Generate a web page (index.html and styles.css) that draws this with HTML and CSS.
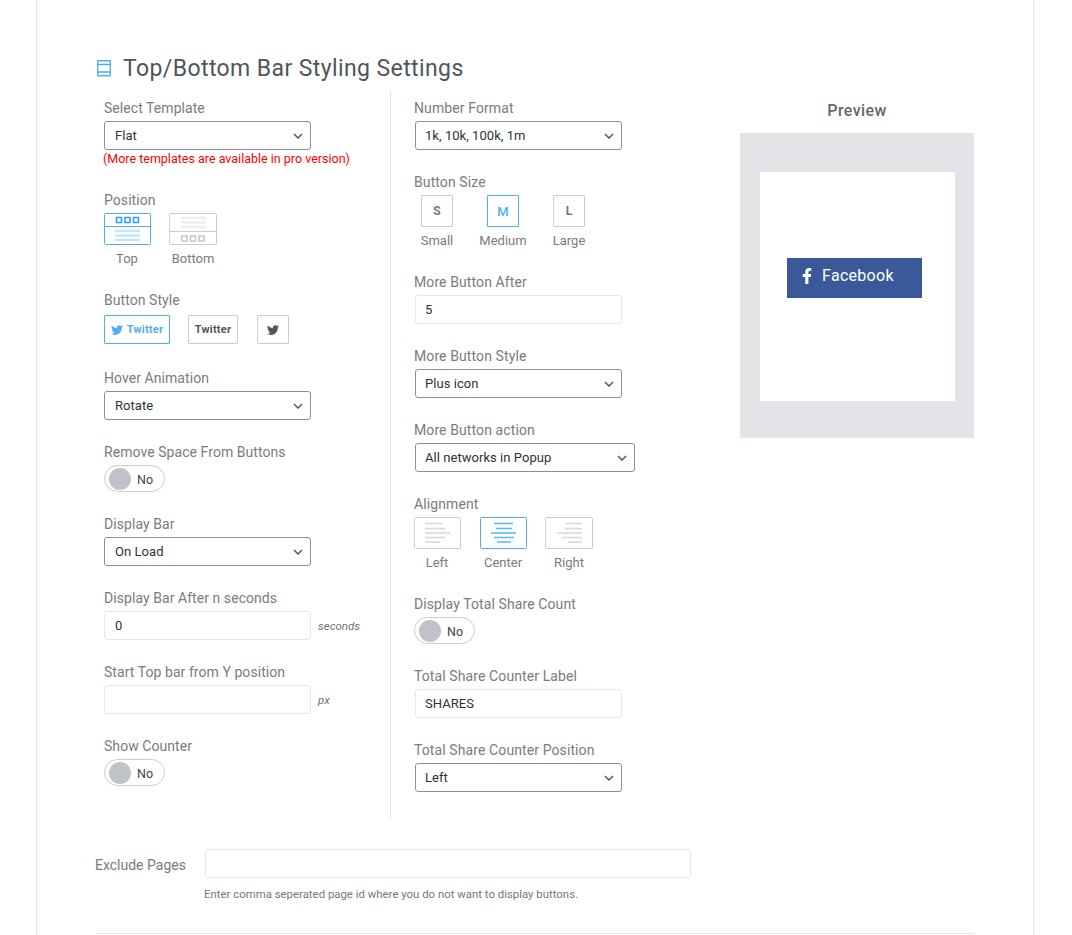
FILE: index.html
```html
<!DOCTYPE html>
<html lang="en">
<head>
    <meta charset="utf-8">
    <title>Top/Bottom Bar Styling Settings</title>
    <link rel="stylesheet" href="styles.css">
</head>
<body>
<div class="wrap">
    <h1 class="title">
        <svg class="title-icon" width="16" height="18" viewBox="0 0 16 18" fill="none" stroke="#4eaef5" stroke-width="1.4">
            <rect x="1.7" y="1.7" width="12.6" height="15" rx="0.5"/>
            <path d="M2 5.5h12M2 13h12"/>
        </svg>
        Top/Bottom Bar Styling Settings
    </h1>

    <div class="columns">
        <div class="col col-left">
            <div class="field">
                <label>Select Template</label>
                <select class="input"><option>Flat</option></select>
                <p class="note">(More templates are available in pro version)</p>
            </div>
            <div class="field">
                <label>Position</label>
                <div class="choices positions">
                    <div class="choice active">
                        <svg class="thumb" width="47" height="32" viewBox="0 0 47 32" fill="none">
                            <rect x="0.5" y="0.5" width="46" height="31" rx="1" stroke="#4eaef5"/>
                            <path d="M1 13.5h45" stroke="#4eaef5"/>
                            <path d="M12.5 4.5h5v5h-5zM21 4.5h5v5h-5zM29.500 4.500h5v5h-5z" stroke="#2f9ff5" stroke-width="1.600"/>
                            <path d="M11 18h25M11 22.500h25M11 27h25" stroke="#c5e4fb" stroke-width="2.500"/>
                        </svg>
                        <span>Top</span>
                    </div>
                    <div class="choice">
                        <svg class="thumb" width="48" height="32" viewBox="0 0 48 32" fill="none">
                            <rect x="0.5" y="0.5" width="47" height="31" rx="1" stroke="#c9ccd2"/>
                            <path d="M1 18.500h46" stroke="#c9ccd2"/>
                            <path d="M12 5h25M12 9.500h25M12 14h25" stroke="#eceef1" stroke-width="2.500"/>
                            <path d="M13 23h5v5h-5zM21.500 23h5v5h-5zM30 23h5v5h-5z" stroke="#c3c6cc" stroke-width="1.600"/>
                        </svg>
                        <span>Bottom</span>
                    </div>
                </div>
            </div>
            <div class="field field-style">
                <label>Button Style</label>
                <div class="styles">
                    <div class="style-btn active wide">
                        <svg width="12" height="10" viewBox="0 0 512 416"><path fill="currentColor" d="M459 104c.3 4.500.3 9.100.3 13.700 0 138.700-105.600 298.600-298.600 298.600-59.500 0-114.700-17.200-161.100-47.100 8.400 1 16.600 1.300 25.300 1.300 49.100 0 94.200-16.600 130.300-44.800-46.100-1-84.800-31.200-98.100-72.800 6.500 1 13 1.600 19.800 1.600 9.400 0 18.800-1.300 27.600-3.600-48.100-9.700-84.100-52-84.100-103v-1.300c14 7.800 30.200 12.700 47.400 13.300-28.300-18.800-46.800-51-46.800-87.400 0-19.500 5.200-37.400 14.300-53 51.700 63.700 129.300 105.300 216.400 109.800-1.600-7.800-2.600-15.900-2.600-24 0-57.800 46.800-104.900 104.900-104.900 30.200 0 57.500 12.700 76.700 33.100 23.700-4.500 46.500-13.300 66.600-25.300-7.800 24-24.400 44.200-46.100 57.200 21.100-2.300 41.600-8.100 60.400-16.200-14.300 20.800-32.200 39.300-52.600 54.200z"/></svg>
                        <b>Twitter</b>
                    </div>
                    <div class="style-btn text"><b>Twitter</b></div>
                    <div class="style-btn icon">
                        <svg width="12" height="10" viewBox="0 0 512 416"><path fill="currentColor" d="M459 104c.3 4.500.3 9.100.3 13.700 0 138.700-105.600 298.600-298.600 298.600-59.500 0-114.700-17.200-161.100-47.100 8.400 1 16.600 1.300 25.300 1.300 49.100 0 94.200-16.600 130.300-44.800-46.100-1-84.800-31.200-98.100-72.800 6.500 1 13 1.600 19.800 1.600 9.400 0 18.800-1.300 27.600-3.600-48.100-9.700-84.100-52-84.100-103v-1.300c14 7.800 30.200 12.700 47.400 13.300-28.300-18.800-46.800-51-46.800-87.400 0-19.500 5.200-37.400 14.300-53 51.700 63.700 129.300 105.300 216.400 109.800-1.600-7.800-2.600-15.900-2.600-24 0-57.800 46.800-104.900 104.900-104.900 30.200 0 57.500 12.700 76.700 33.100 23.700-4.500 46.500-13.300 66.600-25.300-7.800 24-24.400 44.200-46.100 57.200 21.100-2.300 41.600-8.100 60.400-16.200-14.300 20.800-32.200 39.300-52.600 54.200z"/></svg>
                    </div>
                </div>
            </div>
            <div class="field">
                <label>Hover Animation</label>
                <select class="input"><option>Rotate</option></select>
            </div>
            <div class="field">
                <label>Remove Space From Buttons</label>
                <div class="toggle"><i></i>No</div>
            </div>
            <div class="field">
                <label>Display Bar</label>
                <select class="input"><option>On Load</option></select>
            </div>
            <div class="field">
                <label>Display Bar After n seconds</label>
                <div class="with-unit">
                    <input class="input text-input" type="text" value="0">
                    <em>seconds</em>
                </div>
            </div>
            <div class="field">
                <label>Start Top bar from Y position</label>
                <div class="with-unit">
                    <input class="input text-input" type="text">
                    <em>px</em>
                </div>
            </div>
            <div class="field">
                <label>Show Counter</label>
                <div class="toggle"><i></i>No</div>
            </div>
        </div>

        <div class="col col-mid">
            <div class="field">
                <label>Number Format</label>
                <select class="input"><option>1k, 10k, 100k, 1m</option></select>
            </div>
            <div class="field">
                <label>Button Size</label>
                <div class="choices sizes">
                    <div class="choice"><div class="size">S</div><span>Small</span></div>
                    <div class="choice active"><div class="size">M</div><span>Medium</span></div>
                    <div class="choice"><div class="size">L</div><span>Large</span></div>
                </div>
            </div>
            <div class="field">
                <label>More Button After</label>
                <input class="input text-input" type="text" value="5">
            </div>
            <div class="field">
                <label>More Button Style</label>
                <select class="input"><option>Plus icon</option></select>
            </div>
            <div class="field">
                <label>More Button action</label>
                <select class="input input-wide"><option>All networks in Popup</option></select>
            </div>
            <div class="field">
                <label>Alignment</label>
                <div class="choices aligns">
                    <div class="choice">
                        <svg class="thumb" width="47" height="32" viewBox="0 0 47 32" fill="none">
                            <rect x="0.500" y="0.500" width="46" height="31" rx="1" stroke="#c9ccd2"/>
                            <path d="M11 6.500h17M11 11.500h20M11 16h25M11 20.500h20M11 25h15" stroke="#d3d6da" stroke-width="1.600"/>
                        </svg>
                        <span>Left</span>
                    </div>
                    <div class="choice active">
                        <svg class="thumb" width="47" height="32" viewBox="0 0 47 32" fill="none">
                            <rect x="0.500" y="0.500" width="46" height="31" rx="1" stroke="#4eaef5"/>
                            <path d="M14 6.500h19M16 11.500h16M11 16h25M14 20.500h20M17 25h14" stroke="#5ab5f6" stroke-width="1.600"/>
                        </svg>
                        <span>Center</span>
                    </div>
                    <div class="choice">
                        <svg class="thumb" width="48" height="32" viewBox="0 0 48 32" fill="none">
                            <rect x="0.500" y="0.500" width="47" height="31" rx="1" stroke="#c9ccd2"/>
                            <path d="M21 6.500h16M20 11.500h17M12 16h25M17 20.500h20M23 25h14" stroke="#d3d6da" stroke-width="1.600"/>
                        </svg>
                        <span>Right</span>
                    </div>
                </div>
            </div>
            <div class="field">
                <label>Display Total Share Count</label>
                <div class="toggle"><i></i>No</div>
            </div>
            <div class="field">
                <label>Total Share Counter Label</label>
                <input class="input text-input" type="text" value="SHARES">
            </div>
            <div class="field">
                <label>Total Share Counter Position</label>
                <select class="input"><option>Left</option></select>
            </div>
        </div>

        <div class="col-preview">
            <h3>Preview</h3>
            <div class="preview-box">
                <div class="preview-inner">
                    <div class="fb-btn">
                        <svg width="10" height="16" viewBox="0 0 320 512"><path fill="#fff" d="M279 288l14-93h-89v-60c0-25 12-50 52-50h41V7s-37-7-72-7c-73 0-121 44-121 125v70H23v93h81v224h100V288z"/></svg>
                        <span>Facebook</span>
                    </div>
                </div>
            </div>
        </div>
    </div>

    <div class="exclude">
        <label>Exclude Pages</label>
        <input class="text-input exclude-input" type="text">
    </div>
    <p class="help">Enter comma seperated page id where you do not want to display buttons.</p>
    <hr class="rule">
</div>
</body>
</html>
```

FILE: styles.css
```css
* {
    box-sizing: border-box;
}

html, body {
    height: 935px;
    margin: 0;
    overflow: hidden;
    background-color: #fff;
}

body {
    font-family: Roboto, "Liberation Sans", sans-serif;
    font-size: 14px;
    color: #7b7b7b;
}

.wrap {
    width: 998px;
    height: 935px;
    margin-left: 36px;
    padding: 51px 59px 0;
    border-left: 1px solid #e6e6e6;
    border-right: 1px solid #e6e6e6;
}

.title {
    display: flex;
    align-items: center;
    gap: 11px;
    height: 34px;
    margin: 0 0 6px;
    padding-top: 1px;
    font-size: 23px;
    letter-spacing: 0.4px;
    font-weight: 400;
    color: #50555a;
}

.title-icon {
    margin-top: -2px;
}

.columns {
    display: flex;
    height: 727px;
}

.col {
    padding-top: 7px;
}

.col-left {
    width: 295px;
    padding-left: 8px;
    border-right: 1px solid #e2e4e7;
}

.col-mid {
    width: 325px;
    padding-left: 24px;
}

.field {
    margin-bottom: 22px;
}

.field label {
    display: block;
    height: 20px;
    margin-bottom: 3px;
    line-height: 20px;
    font-size: 14px;
    letter-spacing: 0.06px;
}

.col-mid label {
    margin-left: -1px;
    letter-spacing: 0.1px;
}

.input {
    display: block;
    width: 207px;
    height: 29px;
    padding: 0 24px 0 10px;
    border: 1px solid #8c8f94;
    border-radius: 3px;
    font-family: Roboto, "Liberation Sans", sans-serif;
    font-size: 13px;
    letter-spacing: 0.05px;
    color: #2c3338;
    background: #fff url("data:image/svg+xml,%3Csvg xmlns='http://www.w3.org/2000/svg' width='10' height='6'%3E%3Cpath d='M1 1l4 4 4-4' fill='none' stroke='%2350575e' stroke-width='1.500'/%3E%3C/svg%3E") no-repeat right 7px center;
    appearance: none;
}

.col-mid .input {
    padding-left: 9px;
}

.input-wide {
    width: 220px;
}

.text-input {
    border: 1px solid #e6e7ea;
    border-radius: 3px;
    background-image: none;
    background-color: #fff;
}

.note {
    height: 18px;
    margin: 0 0 0 -1px;
    line-height: 18px;
    font-size: 12.500px;
    color: #f00;
}

.choices {
    display: flex;
    gap: 18px;
}

.choice {
    display: flex;
    flex-direction: column;
    align-items: center;
    width: 48px;
}

.choice .thumb {
    display: block;
    flex: none;
}

.choice span {
    height: 19px;
    margin-top: 4px;
    line-height: 20px;
    font-size: 13px;
    white-space: nowrap;
}

.positions {
    margin-left: -1px;
}

.sizes {
    margin-left: -2px;
}

.aligns {
    margin-left: -2px;
}

.size {
    width: 32px;
    height: 32px;
    border: 1px solid #c9ccd2;
    border-radius: 1px;
    line-height: 31px;
    text-align: center;
    font-size: 12px;
    font-weight: 700;
    color: #777;
}

.choice.active .size {
    border-color: #4eaef5;
    color: #4eaef5;
    font-weight: 500;
    font-size: 13px;
}

.field-style {
    margin-bottom: 24px;
}

.field-style label {
    margin-bottom: 5px;
}

.styles {
    display: flex;
    gap: 18px;
}

.style-btn {
    display: flex;
    align-items: center;
    justify-content: center;
    gap: 4px;
    height: 29px;
    border: 1px solid #c9ccd2;
    border-radius: 1px;
    font-size: 11px;
    letter-spacing: 0.2px;
    color: #555;
}

.style-btn.active {
    border-color: #4eaef5;
    color: #4eaef5;
}

.style-btn.wide {
    width: 66px;
}

.style-btn.text {
    width: 50px;
}

.style-btn.icon {
    width: 32px;
    margin-left: 1px;
}

.toggle {
    display: flex;
    align-items: center;
    gap: 6px;
    width: 61px;
    height: 27px;
    padding: 1px 0 0 4px;
    border: 1px solid #c9ccd2;
    border-radius: 14px;
    font-size: 12.500px;
    color: #444;
}

.col-mid .toggle {
    margin-left: -1px;
}

.toggle i {
    width: 22px;
    height: 22px;
    margin-top: -1px;
    border-radius: 50%;
    background-color: #bfc3c9;
}

.with-unit {
    display: flex;
    align-items: center;
    gap: 7px;
}

.with-unit em {
    font-size: 11.500px;
    color: #6f6f6f;
}

.col-preview {
    width: 234px;
    margin-left: 24px;
    padding-top: 9px;
}

.col-preview h3 {
    height: 20px;
    margin: 0 0 13px;
    line-height: 21px;
    text-align: center;
    font-size: 16px;
    letter-spacing: 0.4px;
    font-weight: 500;
    color: #666;
}

.preview-box {
    height: 305px;
    padding: 39px 19px 37px 20px;
    background-color: #e2e4e8;
}

.preview-inner {
    height: 229px;
    padding: 86px 0 0 27px;
    background-color: #fff;
}

.fb-btn {
    display: flex;
    align-items: center;
    gap: 10px;
    width: 135px;
    height: 40px;
    padding: 0 0 5px 15px;
    background-color: #3b5998;
    font-size: 16px;
    letter-spacing: 0.3px;
    font-weight: 400;
    color: #fff;
}

.exclude {
    display: flex;
    align-items: center;
    margin-top: 31px;
}

.exclude label {
    width: 110px;
    margin-left: -1px;
    padding-top: 2px;
    font-size: 14px;
}

.exclude-input {
    width: 486px;
    height: 29px;
}

.help {
    height: 16px;
    margin: 8px 0 0 108px;
    line-height: 16px;
    font-size: 11.400px;
    color: #777;
}

.rule {
    width: 878px;
    margin: 31px 0 0;
    border: 0;
    border-top: 1px solid #e2e4e7;
}
```
